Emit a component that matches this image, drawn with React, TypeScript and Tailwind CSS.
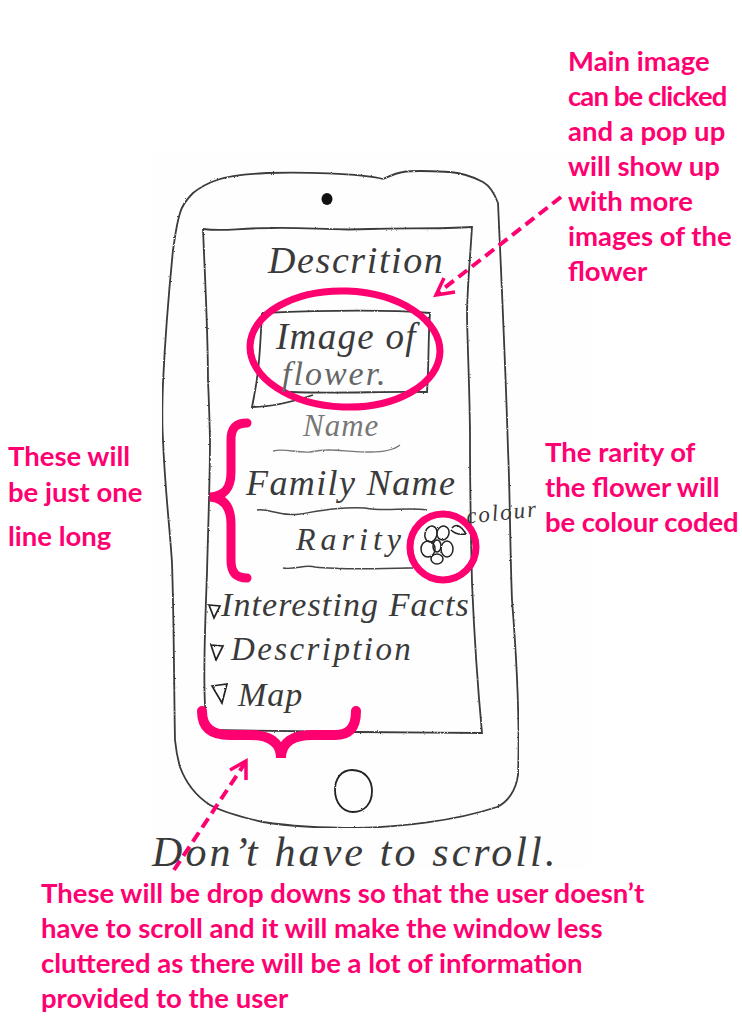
const noteFont = "font-['Lato','Liberation_Sans',sans-serif] font-bold text-[27.5px] text-[#ff0071]";
const handFont = "font-['Liberation_Serif',serif] italic text-[#3a3a3a] whitespace-nowrap absolute";

function SketchLines() {
    return (
        <svg className="absolute left-0 top-0" width={742} height={1020} viewBox="0 0 742 1020" fill="none">
            <defs>
                <filter id="pencil" x="0" y="0" width="100%" height="100%">
                    <feTurbulence type="fractalNoise" baseFrequency="0.7" numOctaves="2" seed="4" />
                    <feDisplacementMap in="SourceGraphic" scale="2" />
                </filter>
            </defs>
            <g filter="url(#pencil)">
                {/* Phone body */}
                <path
                    d="M383 179 C360 173 300 172 267 173 C245 174 228 176 217 180 C205 184 198 189 193 193 C186 200 182 206 180 213 C176 226 175 238 173 250 C170 280 166 320 163 383 C162 410 162 425 163 440 C165 490 170 530 172 563 C174 620 174 690 175 740 C176 750 178 760 180 767 C186 783 196 796 210 805 C225 813 245 818 263 822 C295 827 325 828 357 828 C400 827 455 821 497 807 C508 802 516 790 518 775 C520 720 516 650 512 600 C510 550 510 490 508 450 C506 380 502 290 498 203 C494 192 490 186 483 182 C472 176 460 173 450 172 C430 171 415 170 403 172 C396 173 390 176 383 179"
                    stroke="#3a3a3a"
                    strokeWidth="1.8"
                />
                {/* Screen */}
                <path
                    d="M203 229 C225 232 235 228 270 228 C310 227 330 231 370 229 C410 228 440 229 472 227 C470 260 467 290 467 317 C468 360 470 400 470 440 C470 490 471 540 472 583 C474 630 478 690 482 733 C440 733 400 732 357 732 L207 730 C203 700 204 650 207 573 C208 530 210 480 210 440 C209 400 208 380 208 383 C208 330 205 280 203 229"
                    stroke="#3a3a3a"
                    strokeWidth="1.8"
                />
                {/* Home button */}
                <path d="M352 770 C341 770 335 779 335 790 C335 803 343 812 353 812 C365 812 372 803 372 791 C372 780 365 770 352 770" stroke="#222" strokeWidth="1.8" />
                {/* Image box */}
                <path d="M262 313 C310 311 380 309 430 313 C428 340 429 365 427 392 C385 391 335 394 290 392 M262 313 C260 345 260 370 252 407 C275 407 295 401 313 395" stroke="#3a3a3a" strokeWidth="1.8" />
                {/* Field underlines */}
                <path d="M273 451 C285 448 295 453 310 452 C335 447 345 453 370 452 C385 452 395 449 400 445" stroke="#777" strokeWidth="1.3" />
                <path d="M257 510 C270 508 278 517 300 514 C325 510 340 507 365 508 C385 512 405 507 427 510" stroke="#444" strokeWidth="1.4" />
                <path d="M283 568 C295 570 305 564 315 567 C340 570 375 569 413 568" stroke="#444" strokeWidth="1.4" />
                {/* Flower */}
                <g stroke="#222" strokeWidth="1.5">
                    <ellipse cx="431" cy="534" rx="6" ry="8" transform="rotate(15 431 534)" />
                    <ellipse cx="443" cy="533" rx="6" ry="7" transform="rotate(20 443 533)" />
                    <ellipse cx="428" cy="549" rx="7" ry="8" />
                    <ellipse cx="437" cy="546" rx="4" ry="6" />
                    <ellipse cx="447" cy="549" rx="6" ry="8" />
                    <ellipse cx="437" cy="559" rx="6" ry="5" />
                    <path d="M452 528 C455 524 460 524 466 534 C460 535 454 533 451 530" />
                </g>
                {/* Dropdown arrows */}
                <path d="M209 605 L220 606 L214 618 Z M211 645 L223 646 L216 660 Z M212 686 L227 684 L222 703 Z" stroke="#222" strokeWidth="1.7" />
            </g>
            {/* Camera */}
            <ellipse cx="327" cy="199" rx="5.5" ry="6" fill="#111" />
            {/* Ellipse round the image */}
            <ellipse cx="345" cy="349" rx="95" ry="58" stroke="#ff0071" strokeWidth="7" transform="rotate(2 345 349)" />
            {/* Ring round the flower */}
            <circle cx="443" cy="547" r="33" stroke="#ff0071" strokeWidth="7" />
            {/* Left brace */}
            <path d="M247 423 C236 423 231 428 231 440 L231 472 C231 488 225 496 210 497 C225 498 231 508 231 524 L231 560 C231 574 237 578 247 578" stroke="#ff0071" strokeWidth="9" strokeLinecap="round" />
            {/* Bottom brace */}
            <path d="M202 711 C202 728 212 735 230 735 L250 735 C268 735 281 742 281 758 C281 742 294 735 312 735 L335 735 C349 735 356 728 356 711" stroke="#ff0071" strokeWidth="10" strokeLinecap="round" />
            {/* Dashed arrows */}
            <path d="M561 197 L438 293" stroke="#ff0071" strokeWidth="4" strokeDasharray="11 6" />
            <path d="M444 278 L436 295 L455 292" stroke="#ff0071" strokeWidth="3.5" />
            <path d="M174 870 L245 763" stroke="#ff0071" strokeWidth="4" strokeDasharray="11 6" />
            <path d="M230 770 L246 761 L246 780" stroke="#ff0071" strokeWidth="3.5" />
        </svg>
    );
}

function Handwriting() {
    return (
        <>
            <span className={`${handFont} left-[268px] top-[238px] text-[38px] leading-[44px] tracking-[1.6px]`}>Descrition</span>
            <span className={`${handFont} left-[276px] top-[318px] text-[37px] leading-[38px] tracking-[1.3px]`}>Image of</span>
            <span className={`${handFont} left-[282px] top-[357px] text-[34px] leading-[34px] text-[#666] tracking-[2px]`}>flower.</span>
            <span className={`${handFont} left-[303px] top-[409px] text-[31px] leading-[34px] text-[#777] tracking-[1px]`}>Name</span>
            <span className={`${handFont} left-[246px] top-[462px] text-[36px] leading-[42px] tracking-[1.4px]`}>Family Name</span>
            <span className={`${handFont} left-[296px] top-[520px] text-[32px] leading-[38px] tracking-[5px]`}>Rarity</span>
            <span className={`${handFont} left-[466px] top-[501px] text-[23px] leading-[24px] -rotate-6 tracking-[2px]`}>colour</span>
            <span className={`${handFont} left-[221px] top-[585px] text-[34px] leading-[40px] tracking-[1.1px]`}>Interesting Facts</span>
            <span className={`${handFont} left-[231px] top-[630px] text-[33px] leading-[38px] tracking-[2.4px]`}>Description</span>
            <span className={`${handFont} left-[238px] top-[675px] text-[34px] leading-[40px] tracking-[1px]`}>Map</span>
            <span className={`${handFont} left-[152px] top-[832px] text-[42px] leading-[40px] tracking-[3.1px]`}>Don’t have to scroll.</span>
        </>
    );
}

export default function App() {
    return (
        <div className="relative h-[1020px] w-[742px] overflow-hidden bg-white">
            {/* Scanned paper */}
            <div className="absolute left-[150px] top-[150px] h-[719px] w-[440px] bg-[#fefefe]" />

            <SketchLines />
            <Handwriting />

            <div className={`${noteFont} absolute left-[568px] top-[43px] flex flex-col whitespace-nowrap leading-[35px]`}>
                <span>Main image</span>
                <span className="tracking-[-0.9px]">can be clicked</span>
                <span>and a pop up</span>
                <span>will show up</span>
                <span>with more</span>
                <span>images of the</span>
                <span>flower</span>
            </div>

            <div className={`${noteFont} absolute left-[8px] top-[438px] flex flex-col leading-[36px]`}>
                <span>These will</span>
                <span>be just one</span>
                <span className="mt-2">line long</span>
            </div>

            <div className={`${noteFont} absolute left-[545px] top-[434px] flex flex-col whitespace-nowrap leading-[35px]`}>
                <span>The rarity of</span>
                <span>the flower will</span>
                <span className="tracking-[-0.1px]">be colour coded</span>
            </div>

            <div className={`${noteFont} absolute left-[41px] top-[875px] flex flex-col whitespace-nowrap leading-[35px]`}>
                <span>These will be drop downs so that the user doesn’t</span>
                <span>have to scroll and it will make the window less</span>
                <span>cluttered as there will be a lot of information</span>
                <span>provided to the user</span>
            </div>
        </div>
    );
}
